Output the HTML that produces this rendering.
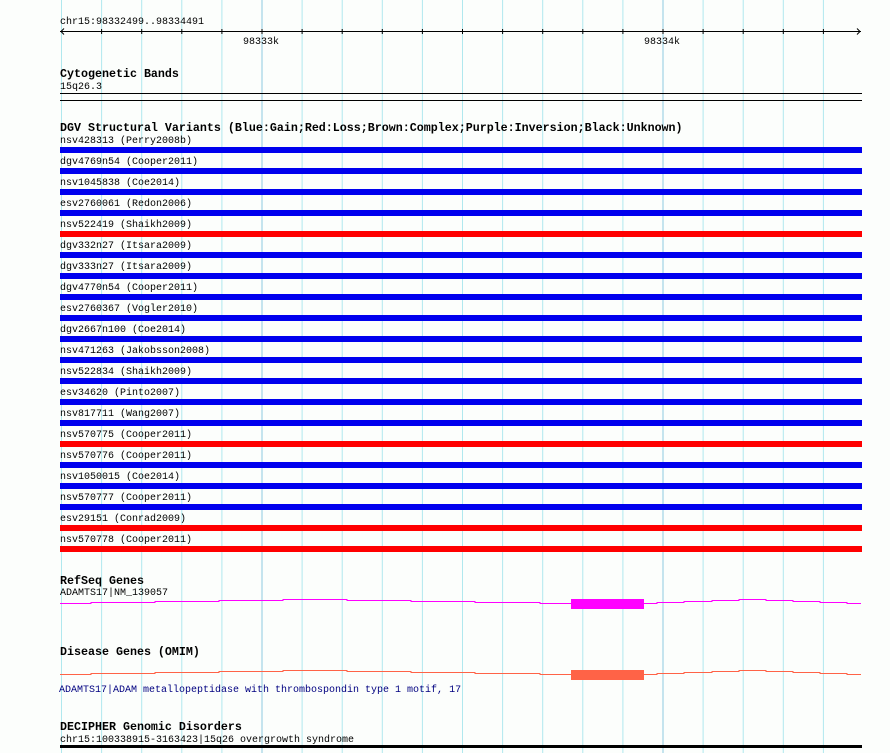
<!DOCTYPE html>
<html><head><meta charset="utf-8"><style>
html,body{margin:0;padding:0;background:#fcfefc;}
svg{display:block;}
text{font-family:"Liberation Mono","DejaVu Sans Mono",monospace;font-size:10px;fill:#000;}
.b{font-weight:bold;font-size:11.67px;}
</style></head><body>
<svg width="890" height="753" xmlns="http://www.w3.org/2000/svg">
<rect width="890" height="753" fill="#fcfefc"/>
<g stroke-width="1">
<line x1="61.5" y1="0" x2="61.5" y2="753" stroke="#b0e8ee"/>
<line x1="101.6" y1="0" x2="101.6" y2="753" stroke="#b0e8ee"/>
<line x1="141.7" y1="0" x2="141.7" y2="753" stroke="#b0e8ee"/>
<line x1="181.8" y1="0" x2="181.8" y2="753" stroke="#b0e8ee"/>
<line x1="221.9" y1="0" x2="221.9" y2="753" stroke="#b0e8ee"/>
<line x1="262" y1="0" x2="262" y2="753" stroke="#8ecae0"/>
<line x1="302.1" y1="0" x2="302.1" y2="753" stroke="#b0e8ee"/>
<line x1="342.2" y1="0" x2="342.2" y2="753" stroke="#b0e8ee"/>
<line x1="382.3" y1="0" x2="382.3" y2="753" stroke="#b0e8ee"/>
<line x1="422.4" y1="0" x2="422.4" y2="753" stroke="#b0e8ee"/>
<line x1="462.5" y1="0" x2="462.5" y2="753" stroke="#b0e8ee"/>
<line x1="502.6" y1="0" x2="502.6" y2="753" stroke="#b0e8ee"/>
<line x1="542.7" y1="0" x2="542.7" y2="753" stroke="#b0e8ee"/>
<line x1="582.8" y1="0" x2="582.8" y2="753" stroke="#b0e8ee"/>
<line x1="622.9" y1="0" x2="622.9" y2="753" stroke="#b0e8ee"/>
<line x1="663" y1="0" x2="663" y2="753" stroke="#8ecae0"/>
<line x1="703.1" y1="0" x2="703.1" y2="753" stroke="#b0e8ee"/>
<line x1="743.2" y1="0" x2="743.2" y2="753" stroke="#b0e8ee"/>
<line x1="783.3" y1="0" x2="783.3" y2="753" stroke="#b0e8ee"/>
<line x1="823.4" y1="0" x2="823.4" y2="753" stroke="#b0e8ee"/>
</g>
<text x="60" y="24">chr15:98332499..98334491</text>
<g stroke="#000" stroke-width="1" fill="none">
<line x1="60" y1="31.5" x2="861" y2="31.5"/>
<polyline points="64,28.5 61,31.5 64,34.5"/>
<polyline points="857,28.5 860,31.5 857,34.5"/>
<path d="M101.6 29v5M141.7 29v5M181.8 29v5M221.9 29v5M262 29v5M302.1 29v5M342.2 29v5M382.3 29v5M422.4 29v5M462.5 29v5M502.6 29v5M542.7 29v5M582.8 29v5M622.9 29v5M663 29v5M703.1 29v5M743.2 29v5M783.3 29v5M823.4 29v5"/>
</g>
<text x="243" y="44">98333k</text>
<text x="644" y="44">98334k</text>

<text class="b" x="60" y="77">Cytogenetic Bands</text>
<text x="60" y="89">15q26.3</text>
<rect x="60" y="93" width="802" height="1" fill="#000"/>
<rect x="60" y="100" width="802" height="1" fill="#000"/>

<text class="b" x="60" y="131">DGV Structural Variants (Blue:Gain;Red:Loss;Brown:Complex;Purple:Inversion;Black:Unknown)</text>
<g>
<text x="60" y="143">nsv428313 (Perry2008b)</text><rect x="60" y="147" width="802" height="6" fill="#0000ee"/>
<text x="60" y="164">dgv4769n54 (Cooper2011)</text><rect x="60" y="168" width="802" height="6" fill="#0000ee"/>
<text x="60" y="185">nsv1045838 (Coe2014)</text><rect x="60" y="189" width="802" height="6" fill="#0000ee"/>
<text x="60" y="206">esv2760061 (Redon2006)</text><rect x="60" y="210" width="802" height="6" fill="#0000ee"/>
<text x="60" y="227">nsv522419 (Shaikh2009)</text><rect x="60" y="231" width="802" height="6" fill="#ff0000"/>
<text x="60" y="248">dgv332n27 (Itsara2009)</text><rect x="60" y="252" width="802" height="6" fill="#0000ee"/>
<text x="60" y="269">dgv333n27 (Itsara2009)</text><rect x="60" y="273" width="802" height="6" fill="#0000ee"/>
<text x="60" y="290">dgv4770n54 (Cooper2011)</text><rect x="60" y="294" width="802" height="6" fill="#0000ee"/>
<text x="60" y="311">esv2760367 (Vogler2010)</text><rect x="60" y="315" width="802" height="6" fill="#0000ee"/>
<text x="60" y="332">dgv2667n100 (Coe2014)</text><rect x="60" y="336" width="802" height="6" fill="#0000ee"/>
<text x="60" y="353">nsv471263 (Jakobsson2008)</text><rect x="60" y="357" width="802" height="6" fill="#0000ee"/>
<text x="60" y="374">nsv522834 (Shaikh2009)</text><rect x="60" y="378" width="802" height="6" fill="#0000ee"/>
<text x="60" y="395">esv34620 (Pinto2007)</text><rect x="60" y="399" width="802" height="6" fill="#0000ee"/>
<text x="60" y="416">nsv817711 (Wang2007)</text><rect x="60" y="420" width="802" height="6" fill="#0000ee"/>
<text x="60" y="437">nsv570775 (Cooper2011)</text><rect x="60" y="441" width="802" height="6" fill="#ff0000"/>
<text x="60" y="458">nsv570776 (Cooper2011)</text><rect x="60" y="462" width="802" height="6" fill="#0000ee"/>
<text x="60" y="479">nsv1050015 (Coe2014)</text><rect x="60" y="483" width="802" height="6" fill="#0000ee"/>
<text x="60" y="500">nsv570777 (Cooper2011)</text><rect x="60" y="504" width="802" height="6" fill="#0000ee"/>
<text x="60" y="521">esv29151 (Conrad2009)</text><rect x="60" y="525" width="802" height="6" fill="#ff0000"/>
<text x="60" y="542">nsv570778 (Cooper2011)</text><rect x="60" y="546" width="802" height="6" fill="#ff0000"/>
</g>

<text class="b" x="60" y="584">RefSeq Genes</text>
<text x="60" y="595">ADAMTS17|NM_139057</text>
<polyline fill="none" stroke="#ff00ff" stroke-width="1" points="60,603.5 91,603.5 91,602.5 155,602.5 155,601.5 219,601.5 219,600.5 283,600.5 283,599.5 347,599.5 347,600.5 411,600.5 411,601.5 475,601.5 475,602.5 540,602.5 540,603.5 657,603.5 657,602.5 684,602.5 684,601.5 712,601.5 712,600.5 739,600.5 739,599.5 766,599.5 766,600.5 793,600.5 793,601.5 820,601.5 820,602.5 847,602.5 847,603.5 861,603.5"/>
<rect x="571" y="599" width="73" height="10" fill="#ff00ff"/>

<text class="b" x="60" y="655">Disease Genes (OMIM)</text>
<polyline fill="none" stroke="#ff6347" stroke-width="1" points="60,674.5 91,674.5 91,673.5 155,673.5 155,672.5 219,672.5 219,671.5 283,671.5 283,670.5 347,670.5 347,671.5 411,671.5 411,672.5 475,672.5 475,673.5 540,673.5 540,674.5 657,674.5 657,673.5 684,673.5 684,672.5 712,672.5 712,671.5 739,671.5 739,670.5 766,670.5 766,671.5 793,671.5 793,672.5 820,672.5 820,673.5 847,673.5 847,674.5 861,674.5"/>
<rect x="571" y="670" width="73" height="10" fill="#ff6347"/>
<text x="59" y="692" style="fill:#000080">ADAMTS17|ADAM metallopeptidase with thrombospondin type 1 motif, 17</text>

<text class="b" x="60" y="730">DECIPHER Genomic Disorders</text>
<text x="60" y="742">chr15:100338915-3163423|15q26 overgrowth syndrome</text>
<rect x="60" y="745" width="802" height="3" fill="#000"/>
</svg>
</body></html>
